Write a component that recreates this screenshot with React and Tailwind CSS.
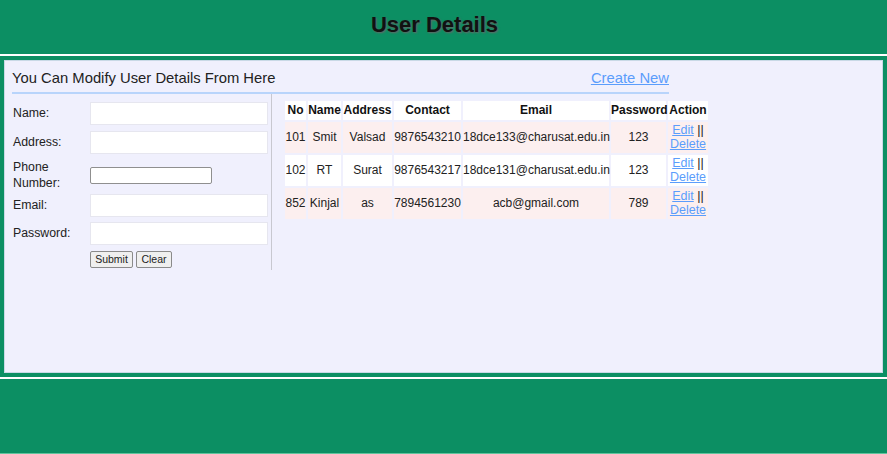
export default function App() {
  const users = [
    { no: "101", name: "Smit", address: "Valsad", contact: "9876543210", email: "18dce133@charusat.edu.in", password: "123", pink: true },
    { no: "102", name: "RT", address: "Surat", contact: "9876543217", email: "18dce131@charusat.edu.in", password: "123", pink: false },
    { no: "852", name: "Kinjal", address: "as", contact: "7894561230", email: "acb@gmail.com", password: "789", pink: true },
  ];

  const field = "w-[178px] h-[23px] bg-white border border-[#e6e6ef] outline-none";

  return (
    <div className="w-[887px] h-[454px] bg-white font-['Liberation_Sans',Arial,sans-serif] text-[#222] overflow-hidden">
      {/* Header */}
      <div className="h-[54px] bg-[#0c8f63] flex items-center justify-center pr-[18px] pb-[6px]">
        <h2 className="text-[22px] font-bold text-[#111] [text-shadow:1px_1px_2px_#666]">User Details</h2>
      </div>

      {/* Main */}
      <div className="mt-[2px] h-[321px] border-4 border-[#0c8f63]">
        <div className="h-full border border-[#c9d9e6] bg-[#f0f0fd] px-[7px]">
          <div className="w-[657px] pt-[6px]">
            <div className="flex items-center justify-between h-[22px]">
              <span className="text-[14.8px]">You Can Modify User Details From Here</span>
              <a href="#" className="text-[14.8px] text-[#5b9dfc] underline">Create New</a>
            </div>
            <div className="mt-[3px] h-[2px] bg-[#b8d4fb]" />
          </div>

          <div className="flex items-start">
            {/* Form */}
            <div className="w-[260px] border-r border-[#c8c8d0] pb-[2px] text-[12.3px]">
              <div className="mt-[7px] h-[25px] flex items-center">
                <label className="w-[78px] pl-[1px]">Name:</label>
                <input className={field} />
              </div>
              <div className="mt-[4px] h-[25px] flex items-center">
                <label className="w-[78px] pl-[1px]">Address:</label>
                <input className={field} />
              </div>
              <div className="mt-[3px] h-[34px] flex items-center">
                <label className="w-[78px] pl-[1px] leading-[16px]">Phone<br />Number:</label>
                <input className="w-[122px] h-[17px] bg-white border border-[#8f8f8f] rounded-[2px] outline-none" />
              </div>
              <div className="mt-[1px] h-[25px] flex items-center">
                <label className="w-[78px] pl-[1px]">Email:</label>
                <input className={field} />
              </div>
              <div className="mt-[3px] h-[25px] flex items-center">
                <label className="w-[78px] pl-[1px]">Password:</label>
                <input className={field} />
              </div>
              <div className="mt-[5px] ml-[78px] flex gap-[3px]">
                <button className="h-[17px] w-[43px] text-[10.5px] leading-none bg-[#efefef] border border-[#8a8a8a] rounded-[2px]">Submit</button>
                <button className="h-[17px] w-[36px] text-[10.5px] leading-none bg-[#efefef] border border-[#8a8a8a] rounded-[2px]">Clear</button>
              </div>
            </div>

            {/* Table */}
            <table className="ml-[11px] mt-[5px] table-fixed w-[427px] border-separate border-spacing-[2px] text-[12px] leading-[14.5px] text-center">
              <thead>
                <tr className="bg-white font-bold text-[#111]">
                  <th className="w-[21px] py-[2px] px-0">No</th>
                  <th className="w-[33px] py-[2px] px-0">Name</th>
                  <th className="w-[49px] py-[2px] px-0">Address</th>
                  <th className="w-[67px] py-[2px] px-0">Contact</th>
                  <th className="w-[146px] py-[2px] px-0">Email</th>
                  <th className="w-[55px] py-[2px] px-0">Password</th>
                  <th className="w-[40px] py-[2px] px-0">Action</th>
                </tr>
              </thead>
              <tbody>
                {users.map((u) => (
                  <tr key={u.no} className={u.pink ? "bg-[#fcefef]" : "bg-white"}>
                    <td className="py-[1px] whitespace-nowrap">{u.no}</td>
                    <td className="py-[1px] whitespace-nowrap">{u.name}</td>
                    <td className="py-[1px] whitespace-nowrap">{u.address}</td>
                    <td className="py-[1px] whitespace-nowrap">{u.contact}</td>
                    <td className="py-[1px] whitespace-nowrap">{u.email}</td>
                    <td className="py-[1px] whitespace-nowrap">{u.password}</td>
                    <td className="py-[1px] text-[12.5px]">
                      <a href="#" className="text-[#5b9dfc] underline">Edit</a> ||
                      <br />
                      <a href="#" className="text-[#5b9dfc] underline">Delete</a>
                    </td>
                  </tr>
                ))}
              </tbody>
            </table>
          </div>
        </div>
      </div>

      {/* Footer */}
      <div className="mt-[2px] h-[75px] bg-[#0c8f63] border-b border-[#5fc59d]" />
    </div>
  );
}
